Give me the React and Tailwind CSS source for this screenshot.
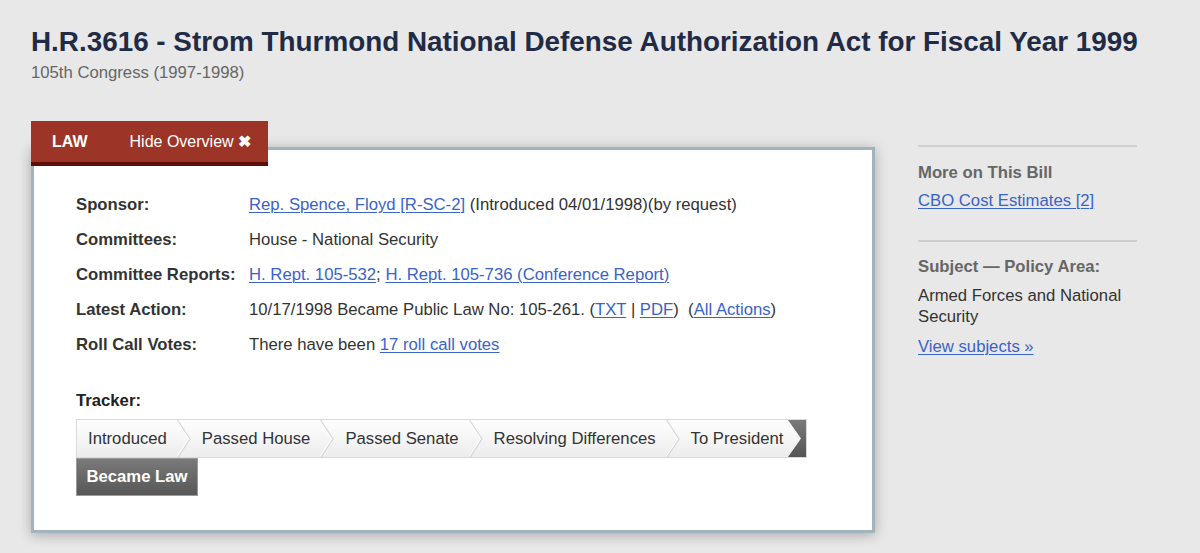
import React from "react";

const font = { fontFamily: '"Liberation Sans", Arial, sans-serif' };

function Chevron() {
  return (
    <svg width="14" height="38" viewBox="0 0 14 38" className="shrink-0 block">
      <polyline points="0.5,0 13,19 0.5,38" fill="none" stroke="#d6d6d6" strokeWidth="1.2" />
      <polyline points="-1,0 11.5,19 -1,38" fill="none" stroke="#ffffff" strokeWidth="1" />
    </svg>
  );
}

function Link({ children }) {
  return <a href="#" className="text-[#3a63c7] underline underline-offset-[2px] decoration-1">{children}</a>;
}

export default function App() {
  const rows = [
    ["Sponsor:", <><Link>Rep. Spence, Floyd [R-SC-2]</Link> (Introduced 04/01/1998)(by request)</>],
    ["Committees:", <>House - National Security</>],
    ["Committee Reports:", <><Link>H. Rept. 105-532</Link>; <Link>H. Rept. 105-736 (Conference Report)</Link></>],
    ["Latest Action:", <>10/17/1998 Became Public Law No: 105-261. (<Link>TXT</Link> | <Link>PDF</Link>)&nbsp; (<Link>All Actions</Link>)</>],
    ["Roll Call Votes:", <>There have been <Link>17 roll call votes</Link></>],
  ];
  const steps = ["Introduced", "Passed House", "Passed Senate", "Resolving Differences", "To President"];
  return (
    <div className="min-h-[553px] w-[1200px] bg-[#e8e8e8] pl-[31px] pt-[26px] overflow-hidden" style={font}>
      <h1 className="text-[27.85px] leading-[32px] font-bold text-[#212b45] whitespace-nowrap">
        H.R.3616 - Strom Thurmond National Defense Authorization Act for Fiscal Year 1999
      </h1>
      <div className="mt-[5px] text-[16.7px] leading-[20px] text-[#666666]">105th Congress (1997-1998)</div>

      <div className="mt-[38px] flex items-start">
        <div className="w-[844px] shrink-0">
          <div className="relative z-10 w-[237px] h-[45px] bg-[#9c3527] border-b-[4px] border-[#5b0f08] flex items-center text-white text-[16px]">
            <span className="ml-[21px] font-bold">LAW</span>
            <span className="ml-[42px]">Hide Overview <span className="font-bold">✖</span></span>
          </div>
          <div className="-mt-[19px] bg-white border-[3px] border-[#a2b3be] shadow-[0_2px_12px_rgba(0,0,0,0.28)] h-[386px] pl-[42px] pt-[37px]">
            <div className="text-[16.7px] text-[#333333]">
              {rows.map(([label, value], i) => (
                <div key={i} className="flex h-[35px] items-center whitespace-nowrap">
                  <div className="w-[173px] shrink-0 font-bold">{label}</div>
                  <div>{value}</div>
                </div>
              ))}
            </div>
            <div className="mt-[29px] text-[16.7px] leading-[20px] font-bold text-[#222]">Tracker:</div>
            <div className="mt-[8px] flex h-[39px] w-fit border border-[#d9d9d9] bg-gradient-to-b from-[#ffffff] to-[#ececec] text-[16.7px] text-[#333] whitespace-nowrap">
              {steps.map((s, i) => (
                <React.Fragment key={s}>
                  <div className={`flex items-center pl-[11px] shrink-0 ${i === steps.length - 1 ? "pr-[5px]" : "pr-[10px]"}`}>{s}</div>
                  {i < steps.length - 1 ? <Chevron /> : null}
                </React.Fragment>
              ))}
              <div className="shrink-0 relative w-[18px] h-full bg-gradient-to-b from-[#7a7a7a] to-[#555555]">
                <svg width="14" height="37" viewBox="0 0 14 37" className="absolute left-0 top-0">
                  <defs>
                    <linearGradient id="tg" x1="0" y1="0" x2="0" y2="1">
                      <stop offset="0" stopColor="#ffffff" />
                      <stop offset="1" stopColor="#ececec" />
                    </linearGradient>
                  </defs>
                  <polygon points="0,0 13,18.5 0,37" fill="url(#tg)" />
                </svg>
              </div>
            </div>
            <div className="w-[122px] h-[38px] flex items-center justify-center bg-gradient-to-b from-[#7a7a7a] to-[#575757] border border-[#9a9a9a] text-white font-bold text-[16.7px]">
              Became Law
            </div>
          </div>
        </div>

        <div className="ml-[43px] mt-[24px] w-[219px] text-[16.7px]">
          <div className="border-t-2 border-[#cfcfcf] pt-[16px]">
            <div className="font-bold text-[#666] leading-[20px]">More on This Bill</div>
            <div className="mt-[8px] leading-[20px]"><Link>CBO Cost Estimates [2]</Link></div>
          </div>
          <div className="mt-[29px] border-t-2 border-[#cfcfcf] pt-[15px]">
            <div className="font-bold text-[#666] leading-[20px]">Subject — Policy Area:</div>
            <div className="mt-[8px] leading-[21px] text-[#333]">Armed Forces and National Security</div>
            <div className="mt-[10px] leading-[20px]"><Link>View subjects »</Link></div>
          </div>
        </div>
      </div>
    </div>
  );
}
